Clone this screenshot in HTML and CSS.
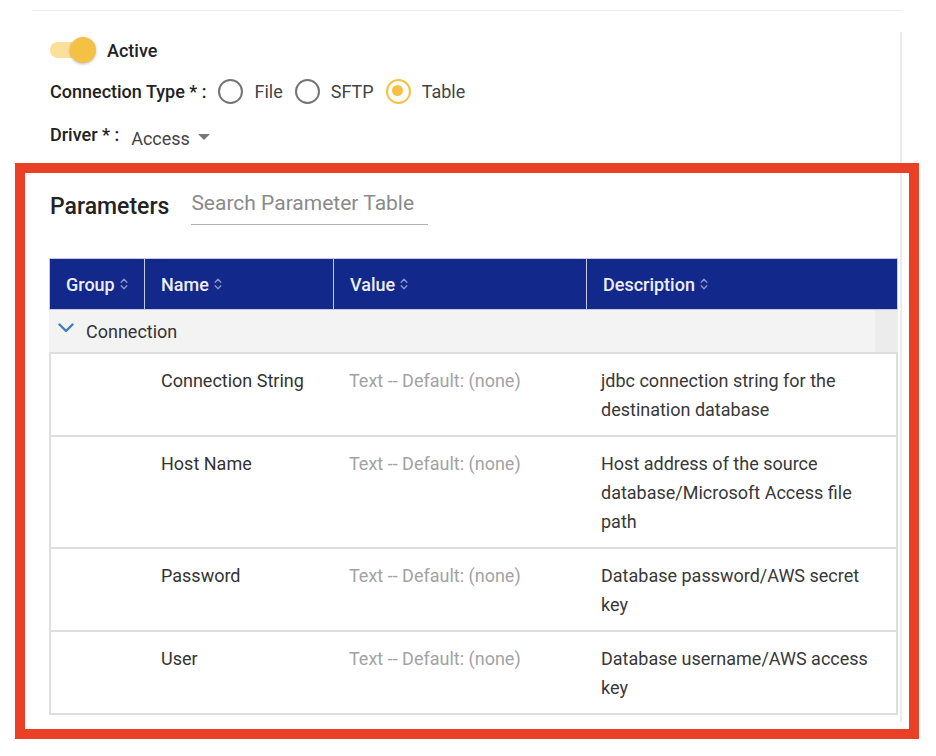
FILE: index.html
```html
<!DOCTYPE html>
<html lang="en">
<head>
<meta charset="utf-8">
<title>Connection Parameters</title>
<link rel="stylesheet" href="styles.css">
</head>
<body>
<div class="top-rule"></div>
<div class="panel">
  <div class="toggle-row">
    <span class="switch"><span class="switch-track"></span><span class="switch-knob"></span></span>
    <span class="toggle-label">Active</span>
  </div>
  <div class="type-row">
    <span class="field-label">Connection Type * :</span>
    <span class="option"><span class="radio"></span><span class="option-text">File</span></span>
    <span class="option"><span class="radio"></span><span class="option-text">SFTP</span></span>
    <span class="option"><span class="radio radio-on"></span><span class="option-text">Table</span></span>
  </div>
  <div class="driver-row">
    <span class="field-label">Driver * :</span>
    <span class="select"><span class="select-value">Access</span><span class="select-arrow"></span></span>
  </div>

  <div class="toolbar">
    <h2 class="params-title">Parameters</h2>
    <input class="search" type="text" placeholder="Search Parameter Table">
  </div>

  <div class="table">
    <div class="thead">
      <div class="th">Group <svg class="sort" viewBox="0 0 8 14" width="8" height="14"><path d="M1.2 5.2 L4 2.2 L6.8 5.2 M1.2 8.8 L4 11.8 L6.8 8.8"/></svg></div>
      <div class="th">Name <svg class="sort" viewBox="0 0 8 14" width="8" height="14"><path d="M1.2 5.2 L4 2.2 L6.8 5.2 M1.2 8.8 L4 11.8 L6.8 8.8"/></svg></div>
      <div class="th">Value <svg class="sort" viewBox="0 0 8 14" width="8" height="14"><path d="M1.2 5.2 L4 2.2 L6.8 5.2 M1.2 8.8 L4 11.8 L6.8 8.8"/></svg></div>
      <div class="th">Description <svg class="sort" viewBox="0 0 8 14" width="8" height="14"><path d="M1.2 5.2 L4 2.2 L6.8 5.2 M1.2 8.8 L4 11.8 L6.8 8.8"/></svg></div>
    </div>
    <div class="group-row">
      <svg class="chev" viewBox="0 0 16 10" width="16" height="10"><path d="M1.5 1.5 L8 8 L14.5 1.5"/></svg>
      <span class="group-name">Connection</span>
    </div>
    <div class="tbody">
      <div class="tr">
        <div class="td"></div>
        <div class="td name">Connection String</div>
        <div class="td value">Text -- Default: (none)</div>
        <div class="td desc">jdbc connection string for the destination database</div>
      </div>
      <div class="tr">
        <div class="td"></div>
        <div class="td name">Host Name</div>
        <div class="td value">Text -- Default: (none)</div>
        <div class="td desc">Host address of the source database/Microsoft Access file path</div>
      </div>
      <div class="tr">
        <div class="td"></div>
        <div class="td name">Password</div>
        <div class="td value">Text -- Default: (none)</div>
        <div class="td desc">Database password/AWS secret key</div>
      </div>
      <div class="tr">
        <div class="td"></div>
        <div class="td name">User</div>
        <div class="td value">Text -- Default: (none)</div>
        <div class="td desc">Database username/AWS access key</div>
      </div>
    </div>
  </div>
</div>
<div class="highlight"></div>
</body>
</html>
```
FILE: styles.css
```css
* { box-sizing: border-box; }

html, body {
  margin: 0;
  padding: 0;
  background: #ffffff;
}

body {
  position: relative;
  width: 936px;
  height: 756px;
  overflow: hidden;
  font-family: Roboto, "Liberation Sans", Arial, sans-serif;
  color: #333;
}

.top-rule {
  margin: 10px 0 0 32px;
  width: 870px;
  height: 1px;
  background: #efefef;
}

.panel {
  margin: 21px 0 0 32px;
  width: 870px;
  padding: 0 0 7px 17px;
  border-right: 2px solid #ebebeb;
}

/* toggle */
.toggle-row {
  height: 36px;
  display: flex;
  align-items: center;
}

.switch {
  position: relative;
  width: 47px;
  height: 26px;
  flex: none;
}

.switch-track {
  position: absolute;
  left: 1px;
  top: 5px;
  width: 40px;
  height: 16px;
  border-radius: 8px;
  background: #fbe09c;
}

.switch-knob {
  position: absolute;
  left: 21px;
  top: 0;
  width: 26px;
  height: 26px;
  border-radius: 50%;
  background: #f5c144;
  box-shadow: 0 1px 3px rgba(0, 0, 0, 0.28);
}

.toggle-label {
  margin-left: 11px;
  font-size: 18px;
  font-weight: 500;
  color: #222;
}

/* connection type */
.type-row {
  margin-top: 6px;
  height: 34px;
  display: flex;
  align-items: center;
}

.field-label {
  font-size: 18px;
  font-weight: 500;
  color: #222;
  margin-left: 1px;
}

.option {
  display: flex;
  align-items: center;
  margin-left: 12px;
}

.option:first-of-type {
  margin-left: 13px;
}

.radio {
  position: relative;
  width: 25px;
  height: 25px;
  border-radius: 50%;
  border: 2.5px solid #747474;
  flex: none;
}

.radio-on {
  border-color: #f4c142;
}

.radio-on::after {
  content: "";
  position: absolute;
  left: 4.5px;
  top: 4.5px;
  width: 11px;
  height: 11px;
  border-radius: 50%;
  background: #f4c142;
}

.option-text {
  margin-left: 11px;
  font-size: 18px;
  color: #444;
}

/* driver */
.driver-row {
  margin-top: 8px;
  height: 36px;
  display: flex;
  align-items: center;
}

.select {
  display: flex;
  align-items: center;
  margin-left: 12px;
  margin-top: 8px;
}

.select-value {
  font-size: 18px;
  color: #444;
}

.select-arrow {
  margin-left: 8px;
  width: 0;
  height: 0;
  border-left: 6px solid transparent;
  border-right: 6px solid transparent;
  border-top: 6px solid #777;
  margin-top: -2px;
}

/* toolbar */
.toolbar {
  margin-top: 36px;
  height: 38px;
  display: flex;
  align-items: center;
}

.params-title {
  margin: 0 0 0 1px;
  font-size: 23px;
  font-weight: 500;
  color: #222;
  line-height: 26px;
}

.search {
  margin-left: 22px;
  width: 237px;
  height: 37px;
  padding: 0 0 7px 0;
  border: none;
  border-bottom: 1.5px solid #b2b2b2;
  outline: none;
  font-family: Roboto, "Liberation Sans", Arial, sans-serif;
  font-size: 21px;
  color: #333;
  background: transparent;
  align-self: flex-start;
}

.search::placeholder {
  color: #8a8a8a;
}

/* table */
.table {
  margin-top: 32px;
  width: 849px;
}

.thead {
  display: grid;
  grid-template-columns: 94px 189px 253px 313px;
  height: 52px;
  background: #12288a;
  border: 1px solid #c6cadf;
}

.th {
  display: flex;
  align-items: center;
  padding-left: 16px;
  font-size: 18px;
  font-weight: 500;
  color: #eceef8;
  border-left: 1.5px solid #c6cadf;
}

.th:first-child {
  border-left: none;
}

.sort {
  margin-left: 5px;
  fill: none;
  stroke: #8f97c6;
  stroke-width: 1.3;
  stroke-linecap: round;
  stroke-linejoin: round;
}

.group-row {
  height: 42px;
  display: flex;
  align-items: center;
  padding-left: 9px;
  background: linear-gradient(to right, #f3f3f3 826px, #ececec 826px);
}

.chev {
  fill: none;
  stroke: #3f7cc4;
  stroke-width: 2.4;
  stroke-linecap: round;
  stroke-linejoin: round;
  margin-top: -6px;
}

.group-name {
  margin-left: 12px;
  font-size: 18px;
  color: #333;
}

.tbody {
  border-left: 2px solid #dedede;
  border-right: 2px solid #dedede;
  border-bottom: 2px solid #dedede;
}

.tr {
  display: grid;
  grid-template-columns: 92px 189px 253px 311px;
  border-top: 2px solid #dedede;
  padding: 12px 0 11px;
}

.td {
  padding: 0 14px 0 16px;
  font-size: 18px;
  line-height: 29px;
}

.name {
  color: #333;
  padding-left: 18px;
}

.value {
  color: #a3a3a3;
  padding-left: 17px;
}

.desc {
  color: #383838;
  padding-left: 16px;
}

/* annotation frame drawn over the screenshot */
.highlight {
  position: absolute;
  left: 15px;
  top: 163px;
  width: 904px;
  height: 576px;
  border: 10px solid #ea4126;
  pointer-events: none;
}
```
